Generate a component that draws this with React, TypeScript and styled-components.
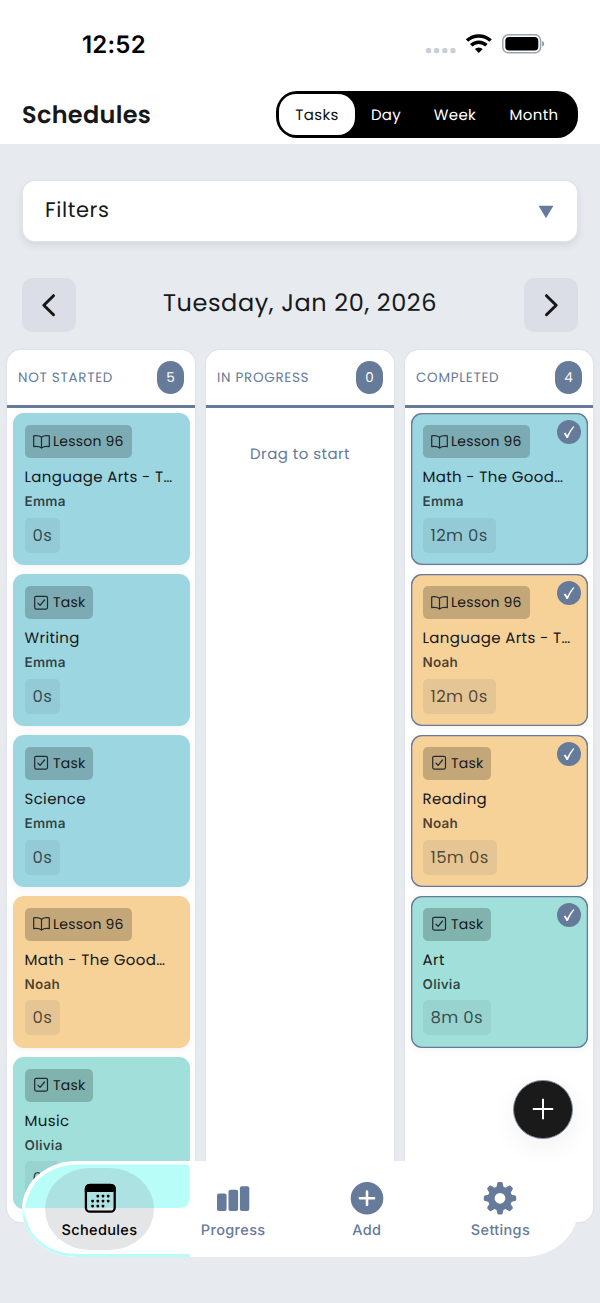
import React from "react";
import styled, { createGlobalStyle } from "styled-components";

const slate = "#667a99";

const GlobalStyle = createGlobalStyle`
  * { box-sizing: border-box; }
  body {
    margin: 0;
    background: #e7eaef;
    color: #16181a;
    font-family: Poppins, Inter, "Liberation Sans", sans-serif;
    text-rendering: geometricPrecision;
  }
  button { text-rendering: inherit; }
`;

const Screen = styled.div`
  position: relative;
  width: 600px;
  height: 1303px;
  overflow: hidden;
  background: #e7eaef;
`;

const Header = styled.header`
  height: 144px;
  background: #fff;
`;

const StatusBar = styled.div`
  height: 91px;
  padding: 0 55px 3px 82px;
  display: flex;
  align-items: center;
  justify-content: space-between;
`;

const Clock = styled.span`
  font-family: Inter, "Liberation Sans", sans-serif;
  font-size: 24px;
  font-weight: 600;
  letter-spacing: 0.2px;
  color: #000;
`;

const TitleRow = styled.div`
  display: flex;
  align-items: center;
  justify-content: space-between;
  height: 47px;
  padding: 0 22px;
`;

const PageTitle = styled.h1`
  margin: 0;
  padding-top: 2px;
  font-size: 24px;
  font-weight: 600;
  letter-spacing: 0.3px;
`;

const Tabs = styled.div`
  display: grid;
  grid-template-columns: 76px 62px 76px 82px;
  width: 302px;
  height: 47px;
  padding: 3px;
  border-radius: 21px;
  background: #000;
`;

const Tab = styled.button<{ $active?: boolean }>`
  border: 0;
  padding: 2px 0 0;
  border-radius: 17px;
  font: inherit;
  font-size: 15px;
  letter-spacing: 0.35px;
  background: ${(p) => (p.$active ? "#fff" : "transparent")};
  color: ${(p) => (p.$active ? "#111" : "#fff")};
`;

const Filters = styled.div`
  display: flex;
  align-items: center;
  justify-content: space-between;
  height: 60px;
  margin: 37px 23px 0;
  padding: 0 23px 2px 22px;
  border-radius: 12px;
  background: #fff;
  box-shadow: 0 0 0 1px #dfe2e9, 0 4px 7px 1px rgba(60, 70, 110, 0.1);
  font-size: 21px;
  letter-spacing: 0.6px;
  svg { margin-top: 3px; }
`;

const DateRow = styled.div`
  display: flex;
  align-items: center;
  justify-content: space-between;
  margin: 37px 22px 18px;
`;

const StepButton = styled.button`
  display: flex;
  align-items: center;
  justify-content: center;
  width: 54px;
  height: 54px;
  padding: 0;
  border: 0;
  border-radius: 10px;
  background: #dbdee6;
`;

const DateLabel = styled.h2`
  margin: 0 0 4px;
  font-size: 24px;
  font-weight: 400;
  letter-spacing: 0.6px;
`;

const Board = styled.main`
  display: grid;
  grid-template-columns: repeat(3, 188px);
  gap: 11px;
  padding: 0 7px;
`;

const Column = styled.section`
  height: 872px;
  border-radius: 14px;
  background: #fff;
  box-shadow: 0 0 2px rgba(60, 70, 90, 0.14);
`;

const ColumnHead = styled.div`
  display: flex;
  align-items: center;
  justify-content: space-between;
  height: 57.5px;
  padding: 0.5px 11px 0;
  border-bottom: 3px solid ${slate};
  font-size: 13.5px;
  letter-spacing: 0.7px;
  color: ${slate};
`;

const Count = styled.span`
  display: flex;
  align-items: center;
  justify-content: center;
  width: 27px;
  height: 33px;
  border-radius: 14px;
  background: ${slate};
  color: #fff;
  font-size: 13.5px;
  letter-spacing: 0;
`;

const CardList = styled.div`
  display: flex;
  flex-direction: column;
  gap: 8.8px;
  padding: 5.900px 5.500px 0;
`;

const EmptyHint = styled.p`
  margin: 38.500px 0 0;
  text-align: center;
  font-size: 15px;
  line-height: 18px;
  letter-spacing: 0.45px;
  color: ${slate};
`;

const cardColors = { blue: "#9bd6e1", orange: "#f6d198", green: "#a1e0da" };
type Tone = keyof typeof cardColors;

const CardBox = styled.article<{ $tone: Tone; $done?: boolean }>`
  position: relative;
  height: 152px;
  padding: 12px;
  border-radius: 11px;
  background: ${(p) => cardColors[p.$tone]};
  box-shadow: ${(p) => (p.$done ? `inset 0 0 0 1.3px ${slate}, ` : "")}0 2px 9px rgba(0, 0, 0, 0.05);
`;

const Tag = styled.div`
  display: inline-flex;
  align-items: center;
  gap: 3.5px;
  height: 33px;
  padding: 0 8px;
  border-radius: 5px;
  background: rgba(0, 0, 0, 0.2);
  font-size: 14px;
  letter-spacing: 0.22px;
`;

const CardTitle = styled.div`
  margin-top: 10px;
  height: 20px;
  line-height: 20px;
  white-space: nowrap;
  font-size: 15px;
  letter-spacing: 0.35px;
`;

const Student = styled.div`
  margin-top: 5px;
  height: 19px;
  line-height: 19px;
  font-family: Inter, "Liberation Sans", sans-serif;
  font-size: 13.5px;
  font-weight: 600;
  letter-spacing: 0.25px;
  color: rgba(0, 0, 0, 0.7);
`;

const Duration = styled.div`
  display: inline-flex;
  align-items: center;
  height: 35px;
  margin-top: 5.6px;
  padding: 0 8px;
  border-radius: 5px;
  background: rgba(80, 100, 120, 0.1);
  font-size: 16.5px;
  letter-spacing: 0.35px;
  color: rgba(0, 0, 0, 0.65);
`;

const DoneBadge = styled.div`
  position: absolute;
  top: 7px;
  right: 7px;
  display: flex;
  align-items: center;
  justify-content: center;
  width: 24px;
  height: 24px;
  border-radius: 50%;
  background: ${slate};
`;

const Fab = styled.button`
  position: absolute;
  left: 513px;
  top: 1079.5px;
  display: flex;
  align-items: center;
  justify-content: center;
  width: 59.5px;
  height: 59.5px;
  padding: 0;
  border: 1px solid #8390a4;
  border-radius: 50%;
  background: #1a1a1a;
  box-shadow: 0 8px 28px rgba(0, 0, 0, 0.06);
`;

const NavBar = styled.nav`
  position: absolute;
  left: 22px;
  top: 1161px;
  width: 556px;
  height: 96px;
  border-radius: 54px / 48px;
  overflow: hidden;
  background: #fff;
`;

const Glass = styled.svg`
  position: absolute;
  left: 0;
  top: 0;
`;

const NavItems = styled.div`
  position: relative;
  display: grid;
  grid-template-columns: repeat(4, 109px);
  justify-content: space-between;
  padding: 7px 23px;
`;

const NavItem = styled.a<{ $active?: boolean }>`
  display: flex;
  flex-direction: column;
  align-items: center;
  height: 82px;
  padding-top: 13px;
  border-radius: 45px / 41px;
  background: ${(p) => (p.$active ? "rgba(128, 133, 140, 0.21)" : "transparent")};
  color: ${(p) => (p.$active ? "#000" : slate)};
  font-family: Inter, "Liberation Sans", sans-serif;
  font-size: 14.5px;
  line-height: 18px;
  font-weight: 500;
  letter-spacing: 0.35px;
  svg { height: 34px; margin-bottom: 7px; }
`;

const BookIcon = () => (
  <svg width="17" height="14" viewBox="0 0 17 14" fill="none" stroke="#202a30" strokeWidth="1.2" strokeLinejoin="round">
    <path d="M8.500 2.200C6.900.9 3.400.5.700.8v10.800c2.700-.3 6.200 0 7.800 1.500 1.600-1.500 5.100-1.800 7.800-1.500V.8C13.600.5 10.100.9 8.500 2.200v10.900" />
  </svg>
);

const TaskIcon = () => (
  <svg width="17" height="16" viewBox="0 0 17 16" fill="none" stroke="#202a30" strokeWidth="1.2" strokeLinecap="round" strokeLinejoin="round">
    <rect x="1.700" y="1.300" width="12.800" height="12.800" rx="1.500" />
    <path d="M4.900 8.100l2.200 2.200 4.400-5.300" />
  </svg>
);

const Chevron = ({ right }: { right?: boolean }) => (
  <svg width="16" height="24" viewBox="0 0 16 24" fill="none" stroke="#161616" strokeWidth="3" strokeLinecap="round" strokeLinejoin="round">
    <path d={right ? "M3.500 2.700l9.700 9.500-9.700 9.500" : "M12.500 2.700L2.800 12.200l9.700 9.500"} />
  </svg>
);

const StatusIcons = () => (
  <svg width="120" height="26" viewBox="425 31 120 26">
    <g fill="#c9cfd7">
      <rect x="426" y="48" width="5.300" height="5.300" rx="2" />
      <rect x="434" y="48" width="5.300" height="5.300" rx="2" />
      <rect x="442.200" y="48" width="5.300" height="5.300" rx="2" />
      <rect x="450.300" y="48" width="5.300" height="5.300" rx="2" />
    </g>
    <g fill="none" stroke="#000" strokeWidth="3.500">
      <path d="M467 40.600a17.200 17.200 0 0 1 23.600 0" />
      <path d="M471.200 45.200a11 11 0 0 1 15.200 0" />
    </g>
    <path d="M474.900 49a5.800 5.800 0 0 1 7.800 0l-3.900 4z" fill="#000" />
    <rect x="502.800" y="34.800" width="37.800" height="18" rx="5.500" fill="#fff" stroke="#9aa3b0" strokeWidth="1.500" />
    <rect x="505.300" y="37" width="33" height="13.600" rx="3.800" fill="#000" />
    <path d="M542.200 41c2.600 1 2.600 4.600 0 5.600z" fill="#8b95a3" />
  </svg>
);

const CalendarIcon = () => (
  <svg width="34" height="34" viewBox="0 0 34 34">
    <rect x="2.900" y="4" width="28.800" height="26.700" rx="4" fill="none" stroke="#000" strokeWidth="2.300" />
    <path d="M1.800 11V7.500a4.500 4.500 0 0 1 4.500-4.500H28.200A4.500 4.500 0 0 1 32.800 7.500v3.500z" fill="#000" />
    {[[14, 15], [19.200, 15], [24.400, 15], [8.800, 20], [14, 20], [19.200, 20], [24.400, 20], [8.800, 25], [14, 25], [19.200, 25]].map(([x, y]) => (
      <rect key={`${x}-${y}`} x={x - 0.500} y={y - 1.200} width="2.600" height="2.600" rx="0.800" />
    ))}
  </svg>
);

const BarsIcon = () => (
  <svg width="34" height="34" viewBox="0 0 34 34" fill={slate}>
    <rect x="1" y="12.600" width="9.600" height="17.500" rx="2" />
    <rect x="12.500" y="8.800" width="9.600" height="21.300" rx="2" />
    <rect x="23.900" y="5.300" width="9.400" height="24.800" rx="2" />
  </svg>
);

const AddIcon = () => (
  <svg width="34" height="34" viewBox="0 0 34 34">
    <circle cx="17" cy="17.300" r="16.300" fill={slate} />
    <path d="M17 10.600v13.400M9.900 17.300h14.200" stroke="#fff" strokeWidth="2.600" strokeLinecap="round" />
  </svg>
);

const GearIcon = () => (
  <svg width="34" height="34" viewBox="0 0 34 34">
    <g fill={slate} transform="translate(0 .3)">
      {[0, 45, 90, 135, 180, 225, 270, 315].map((a) => (
        <path key={a} d="M14.300 1.900Q14.500.8 15.600.8h2.800q1.100 0 1.300 1.100l1 4.500h-7.400z" transform={`rotate(${a} 17 17)`} />
      ))}
      <path fillRule="evenodd" d="M17 4.900a12.100 12.100 0 1 1 0 24.200 12.100 12.100 0 0 1 0-24.200zM17 11.600a5.400 5.400 0 1 0 0 10.800 5.400 5.400 0 0 0 0-10.800z" />
    </g>
  </svg>
);

type CardData = { kind: "Lesson 96" | "Task"; title: string; student: string; time: string; tone: Tone };

const notStarted: CardData[] = [
  { kind: "Lesson 96", title: "Language Arts - T…", student: "Emma", time: "0s", tone: "blue" },
  { kind: "Task", title: "Writing", student: "Emma", time: "0s", tone: "blue" },
  { kind: "Task", title: "Science", student: "Emma", time: "0s", tone: "blue" },
  { kind: "Lesson 96", title: "Math - The Good…", student: "Noah", time: "0s", tone: "orange" },
  { kind: "Task", title: "Music", student: "Olivia", time: "0s", tone: "green" },
];

const completed: CardData[] = [
  { kind: "Lesson 96", title: "Math - The Good…", student: "Emma", time: "12m 0s", tone: "blue" },
  { kind: "Lesson 96", title: "Language Arts - T…", student: "Noah", time: "12m 0s", tone: "orange" },
  { kind: "Task", title: "Reading", student: "Noah", time: "15m 0s", tone: "orange" },
  { kind: "Task", title: "Art", student: "Olivia", time: "8m 0s", tone: "green" },
];

const Card = ({ card, done }: { card: CardData; done?: boolean }) => (
  <CardBox $tone={card.tone} $done={done}>
    <Tag>
      {card.kind === "Task" ? <TaskIcon /> : <BookIcon />}
      {card.kind}
    </Tag>
    <CardTitle>{card.title}</CardTitle>
    <Student>{card.student}</Student>
    <Duration>{card.time}</Duration>
    {done && (
      <DoneBadge>
        <svg width="14" height="14" viewBox="0 0 14 14" fill="#fff">
          <path d="M1.700 8.600l1.600-1 1.900 2.700Q7.800 5 11.300 1.300l1 .5Q8.300 6.800 6 12.700l-1.600.2Q3.400 10.700 1.700 8.600z" />
        </svg>
      </DoneBadge>
    )}
  </CardBox>
);

export default function App() {
  return (
    <Screen>
      <GlobalStyle />
      <Header>
        <StatusBar>
          <Clock>12:52</Clock>
          <StatusIcons />
        </StatusBar>
        <TitleRow>
          <PageTitle>Schedules</PageTitle>
          <Tabs>
            <Tab $active>Tasks</Tab>
            <Tab>Day</Tab>
            <Tab>Week</Tab>
            <Tab>Month</Tab>
          </Tabs>
        </TitleRow>
      </Header>
      <Filters>
        Filters
        <svg width="16" height="14" viewBox="0 0 16 14"><path d="M.6.800h14.800L8 13.300z" fill={slate} /></svg>
      </Filters>
      <DateRow>
        <StepButton aria-label="Previous day"><Chevron /></StepButton>
        <DateLabel>Tuesday, Jan 20, 2026</DateLabel>
        <StepButton aria-label="Next day"><Chevron right /></StepButton>
      </DateRow>
      <Board>
        <Column>
          <ColumnHead>NOT STARTED<Count>5</Count></ColumnHead>
          <CardList>{notStarted.map((c) => <Card key={c.title} card={c} />)}</CardList>
        </Column>
        <Column>
          <ColumnHead>IN PROGRESS<Count>0</Count></ColumnHead>
          <EmptyHint>Drag to start</EmptyHint>
        </Column>
        <Column>
          <ColumnHead>COMPLETED<Count>4</Count></ColumnHead>
          <CardList>{completed.map((c) => <Card key={c.title} card={c} done />)}</CardList>
        </Column>
      </Board>
      <Fab aria-label="New task">
        <svg width="22" height="22" viewBox="0 0 22 22" stroke="#fff" strokeWidth="2"><path d="M11 .8v20.400M.8 11h20.400" /></svg>
      </Fab>
      <NavBar>
        <Glass width="180" height="96" viewBox="0 0 180 96">
          <defs>
            <linearGradient id="rim" x1="0" y1="0" x2="0" y2="1">
              <stop offset="0.450" stopColor="#b9fdf9" stopOpacity="0" />
              <stop offset="0.600" stopColor="#b9fdf9" />
            </linearGradient>
          </defs>
          <path d="M3 47C7 20 28 3.500 56 3.500H164q3.500 0 3.500 3.500V37q0 10-10 10z" fill="#b9fdf9" />
          <path d="M168 94.500H56C25 94.500 1.500 75 1.500 48S25 1.500 56 1.500" fill="none" stroke="url(#rim)" strokeWidth="3" />
        </Glass>
        <NavItems>
          <NavItem $active><CalendarIcon />Schedules</NavItem>
          <NavItem><BarsIcon />Progress</NavItem>
          <NavItem><AddIcon />Add</NavItem>
          <NavItem><GearIcon />Settings</NavItem>
        </NavItems>
      </NavBar>
    </Screen>
  );
}
